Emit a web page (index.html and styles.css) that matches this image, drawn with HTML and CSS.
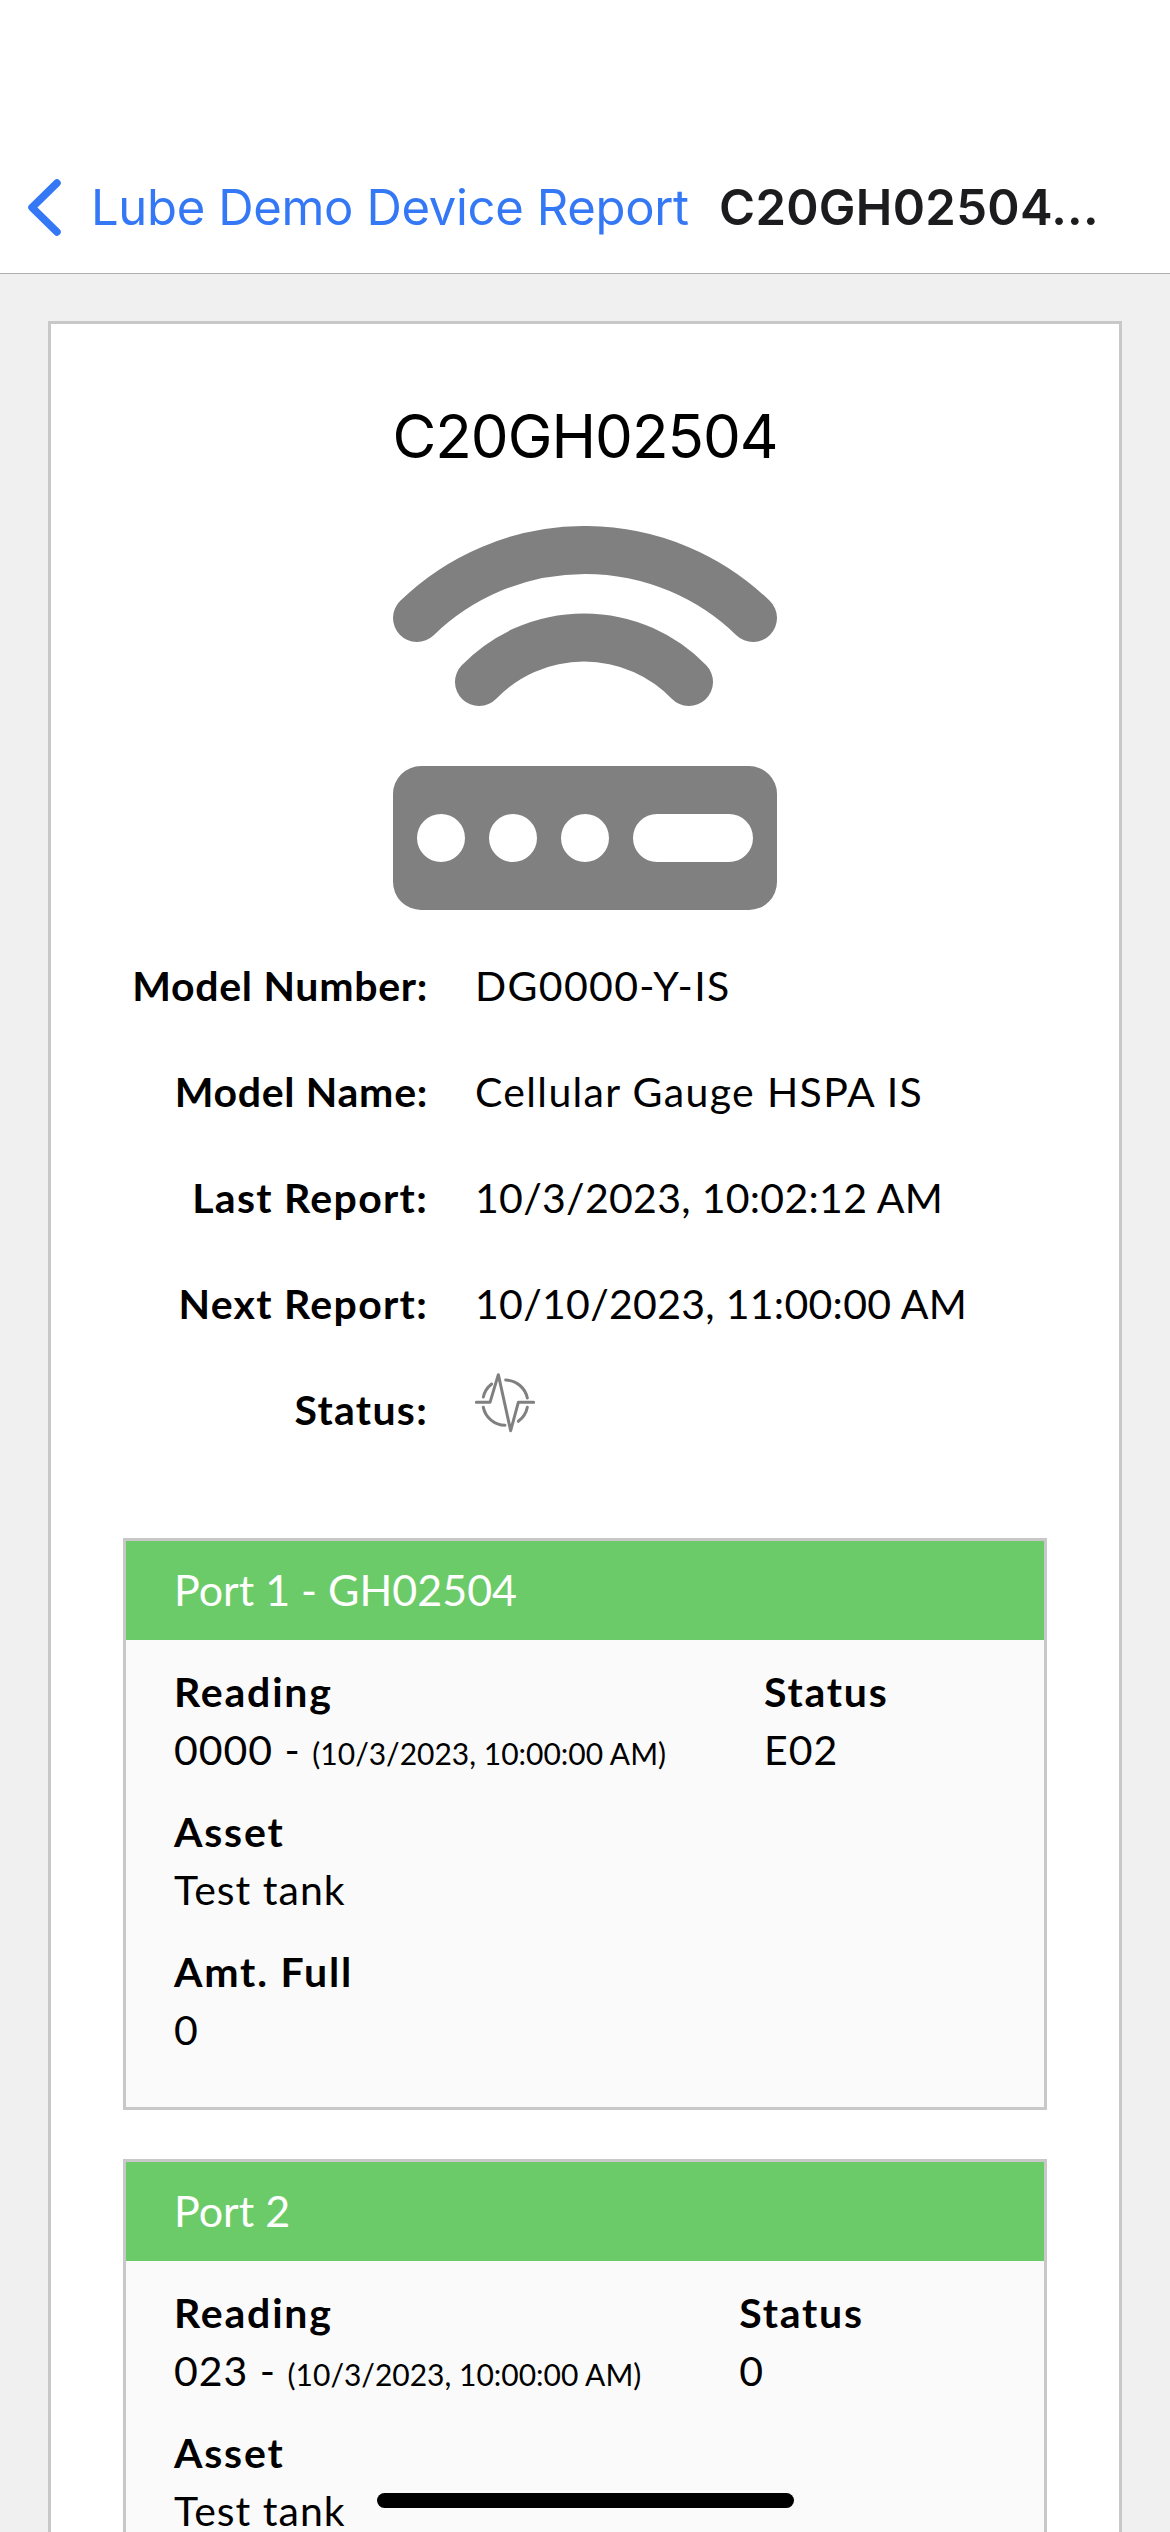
FILE: index.html
```html
<!DOCTYPE html>
<html lang="en">
<head>
<meta charset="utf-8">
<title>C20GH02504</title>
<link rel="stylesheet" href="styles.css">
</head>
<body>
<header class="nav">
  <div class="nav-bar">
    <svg class="chevron" viewBox="0 0 33 57"><path d="M29 4 L4 28.5 L29 53"/></svg>
    <span class="nav-back">Lube Demo Device Report</span>
    <span class="nav-title">C20GH02504...</span>
  </div>
</header>
<main class="main">
  <section class="card">
    <h1 class="device-name">C20GH02504</h1>
    <svg class="device-icon" viewBox="0 0 384 384">
      <path class="arc" d="M24 92 A241.5 241.5 0 0 1 360 92"/>
      <path class="arc" d="M86 156 A146 146 0 0 1 296 156"/>
      <path class="router" fill-rule="evenodd" d="M28 240 H356 A28 28 0 0 1 384 268 V356 A28 28 0 0 1 356 384 H28 A28 28 0 0 1 0 356 V268 A28 28 0 0 1 28 240 Z M48 288 A24 24 0 1 0 48 336 A24 24 0 1 0 48 288 Z M120 288 A24 24 0 1 0 120 336 A24 24 0 1 0 120 288 Z M192 288 A24 24 0 1 0 192 336 A24 24 0 1 0 192 288 Z M264 288 A24 24 0 0 0 264 336 H336 A24 24 0 0 0 336 288 Z"/>
    </svg>
    <dl class="facts">
      <div class="fact"><dt>Model Number:</dt><dd class="wide">DG0000-Y-IS</dd></div>
      <div class="fact"><dt>Model Name:</dt><dd class="wide">Cellular Gauge HSPA IS</dd></div>
      <div class="fact"><dt class="spaced">Last Report:</dt><dd>10/3/2023, 10:02:12 AM</dd></div>
      <div class="fact"><dt class="spaced">Next Report:</dt><dd>10/10/2023, 11:00:00 AM</dd></div>
      <div class="fact"><dt class="spaced">Status:</dt><dd class="status-cell">
        <svg class="pulse" viewBox="0 0 180 180">
          <path d="M4 88 H45 L70 5 L107 173 L130 88 H176"/>
          <path d="M25 72 A68 68 0 0 1 50 33"/>
          <path d="M92 21 A68 68 0 0 1 157 75"/>
          <path d="M157 103 A68 68 0 0 1 130 145"/>
          <path d="M25 103 A68 68 0 0 0 90 157"/>
        </svg>
      </dd></div>
    </dl>
    <article class="port">
      <h2 class="port-head">Port 1 - GH02504</h2>
      <div class="port-body">
        <div class="port-row">
          <div class="item reading"><div class="label">Reading</div><div class="value">0000 - <small>(10/3/2023, 10:00:00 AM)</small></div></div>
          <div class="item"><div class="label">Status</div><div class="value">E02</div></div>
        </div>
        <div class="item"><div class="label">Asset</div><div class="value">Test tank</div></div>
        <div class="item"><div class="label">Amt. Full</div><div class="value">0</div></div>
      </div>
    </article>
    <article class="port">
      <h2 class="port-head">Port 2</h2>
      <div class="port-body">
        <div class="port-row">
          <div class="item reading"><div class="label">Reading</div><div class="value">023 - <small>(10/3/2023, 10:00:00 AM)</small></div></div>
          <div class="item"><div class="label">Status</div><div class="value">0</div></div>
        </div>
        <div class="item"><div class="label">Asset</div><div class="value">Test tank</div></div>
        <div class="item"><div class="label">Amt. Full</div><div class="value">0</div></div>
      </div>
    </article>
  </section>
</main>
<div class="home-indicator"></div>
</body>
</html>
```
FILE: styles.css
```css
* { box-sizing: border-box; }
html, body { margin: 0; padding: 0; height: 2532px; overflow: hidden; }
body { background: #f0f0f0; font-family: "Lato", "Liberation Sans", sans-serif; color: #000; }

.nav { background: #fff; padding-top: 141px; height: 274px; border-bottom: 1px solid #b0b0b0; }
.nav-bar { height: 132px; display: flex; align-items: center; padding-left: 28px; font-family: "Inter", "Liberation Sans", sans-serif; font-size: 49px; white-space: nowrap; }
.chevron { width: 33px; height: 57px; flex: none; margin-right: 30px; }
.chevron path { fill: none; stroke: #3478f6; stroke-width: 7.5; stroke-linecap: round; stroke-linejoin: round; }
.nav-back { color: #3478f6; width: 628px; flex: none; letter-spacing: -0.35px; }
.nav-title { color: #1c1c1e; font-weight: 600; letter-spacing: 0.3px; }

.main { padding: 47px 48px 0; }
.card { background: #fff; border: 3px solid #c8c8c8; padding: 72px 72px 0; }
.device-name { margin: 0 0 50px; text-align: center; font-family: "Inter", "Liberation Sans", sans-serif; font-size: 60px; font-weight: 400; letter-spacing: -1px; line-height: 80px; color: #000; }
.device-icon { display: block; width: 384px; height: 384px; margin: 0 auto 24px; }
.arc { fill: none; stroke: #808080; stroke-width: 48; stroke-linecap: round; }
.router { fill: #808080; }

.facts { margin: -2px 0 76px; }
.fact { display: flex; align-items: center; height: 106px; font-size: 41px; letter-spacing: 0.3px; }
.fact dt { width: 305px; flex: none; text-align: right; font-weight: 700; letter-spacing: 0.7px; }
.fact dt.spaced { letter-spacing: 1.3px; }
.fact dd { margin: 0 0 0 47px; }
.fact dd.wide { letter-spacing: 1.35px; }
.fact .status-cell { display: flex; margin: 2px 0 14px 47px; }
.pulse { width: 60px; height: 60px; }
.pulse path { fill: none; stroke: #808080; stroke-width: 9; stroke-linecap: round; stroke-linejoin: round; }

.port { border: 3px solid #c8c8c8; background: #fafafa; margin-bottom: 49px; }
.port-head { margin: 0; height: 99px; display: flex; align-items: center; padding: 0 0 3px 48px; background: #6ccb69; color: #fff; font-size: 43px; font-weight: 400; }
.port-body { padding: 23px 48px 24px; font-size: 41px; }
.port-row { display: flex; }
.reading { margin-right: 98px; }
.item { margin-bottom: 24px; }
.label { font-weight: 700; line-height: 58px; letter-spacing: 1.8px; }
.value { line-height: 58px; white-space: nowrap; letter-spacing: 1px; }
.value small { font-size: 30px; line-height: 1; letter-spacing: 0; }

.home-indicator { position: fixed; left: 377px; top: 2493px; width: 417px; height: 15px; border-radius: 8px; background: #000; }
```
